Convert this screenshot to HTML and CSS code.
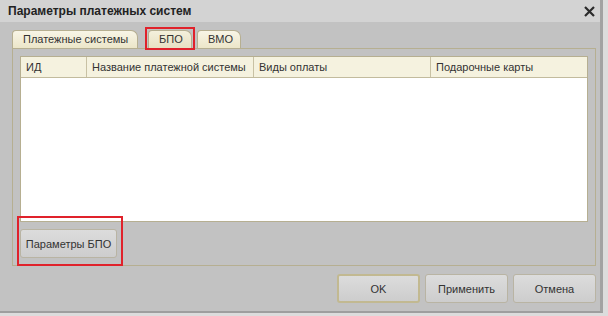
FILE: index.html
```html
<!DOCTYPE html>
<html lang="ru">
<head>
    <meta charset="UTF-8">
    <title>Параметры платежных систем</title>
    <link rel="stylesheet" href="styles.css">
</head>
<body>
    <div class="window">
        <div class="titlebar">
            <span class="title">Параметры платежных систем</span>
            <svg class="close" width="11" height="11" viewBox="0 0 11 11">
                <path d="M1 1 L10 10 M10 1 L1 10" stroke="#2b2b2b" stroke-width="2.2" fill="none"/>
            </svg>
        </div>

        <div class="content">
            <div class="tabs">
                <div class="tab tab-first">Платежные системы</div>
                <div class="tab tab-active marked">БПО</div>
                <div class="tab tab-last">ВМО</div>
            </div>

            <div class="panel">
                <div class="grid">
                    <div class="grid-head">
                        <div class="col col-id">ИД</div>
                        <div class="col col-name">Название платежной системы</div>
                        <div class="col col-types">Виды оплаты</div>
                        <div class="col col-cards">Подарочные карты</div>
                    </div>
                    <div class="grid-body"></div>
                </div>
                <div class="panel-footer">
                    <button class="btn btn-bpo">Параметры БПО</button>
                </div>
            </div>

            <div class="footer">
                <button class="btn btn-default">OK</button>
                <button class="btn">Применить</button>
                <button class="btn">Отмена</button>
            </div>
        </div>
    </div>
</body>
</html>
```

FILE: styles.css
```css
html, body {
    margin: 0;
    padding: 0;
    background-color: #dcdcdc;
}
body {
    width: 608px;
    height: 316px;
    overflow: hidden;
    font-family: "Liberation Sans", Arial, sans-serif;
    font-size: 11px;
    color: #3a3a3a;
}
.window {
    width: 603px;
    height: 313px;
    background-color: #c2c2c2;
    border-right: 3px solid #a2a2a2;
    border-bottom: 2px solid #9e9e9e;
    box-sizing: border-box;
}
.titlebar {
    height: 22px;
    background-color: #d3d3d3;
    display: flex;
    align-items: center;
    justify-content: space-between;
    padding: 0 5px 0 8px;
}
.title {
    font-weight: bold;
    font-size: 12px;
    color: #222222;
}
.close {
    display: block;
}
.content {
    padding: 8px 0 0 12px;
}
.tabs {
    display: flex;
    align-items: flex-end;
    height: 18px;
}
.tab {
    height: 17px;
    line-height: 17px;
    padding: 0 10px;
    white-space: nowrap;
    background: linear-gradient(#f8f5e6, #ece6c9);
    border: 1px solid #b6af91;
    border-bottom: none;
    border-radius: 4px 7px 0 0;
    color: #333333;
}
.tab-first {
    width: 104px;
    margin-right: 10px;
}
.tab-active {
    width: 22px;
    margin-right: 5px;
    text-align: center;
    background: linear-gradient(#f4f0dc, #e8e1c2);
}
.tab-last {
    width: 22px;
    text-align: center;
}
.marked {
    position: relative;
}
.marked::after {
    content: "";
    position: absolute;
    left: -4px;
    right: -4px;
    top: -4px;
    bottom: -2px;
    border: 2px solid #e0222b;
}
.panel {
    width: 584px;
    height: 218px;
    box-sizing: border-box;
    border: 1px solid #b6af91;
    padding: 7px;
    display: flex;
    flex-direction: column;
}
.grid {
    height: 166px;
    border: 1px solid #b6af91;
    background-color: #ffffff;
    display: flex;
    flex-direction: column;
}
.grid-head {
    display: flex;
    height: 20px;
    background-color: #f5f2df;
    border-bottom: 1px solid #c2bb9d;
}
.col {
    line-height: 20px;
    padding-left: 5px;
    white-space: nowrap;
    border-right: 1px solid #c8c1a4;
    box-sizing: border-box;
    color: #333333;
}
.col-id { width: 66px; }
.col-name { width: 167px; }
.col-types { width: 177px; }
.col-cards { flex: 1; border-right: none; }
.grid-body {
    flex: 1;
}
.panel-footer {
    margin-top: 7px;
}
.btn {
    height: 29px;
    padding: 0;
    font-family: "Liberation Sans", Arial, sans-serif;
    font-size: 11px;
    color: #333333;
    background: linear-gradient(#dcdcdc, #cdcdcd);
    border: 1px solid #b9b4a3;
    border-radius: 3px;
    box-sizing: border-box;
}
.btn-bpo {
    width: 97px;
    position: relative;
}
.btn-bpo::after {
    content: "";
    position: absolute;
    left: -4px;
    right: -7px;
    top: -14px;
    bottom: -9px;
    border: 2px solid #e0222b;
}
.footer {
    display: flex;
    justify-content: flex-end;
    gap: 5px;
    margin-top: 8px;
    width: 584px;
}
.footer .btn {
    width: 83px;
}
.btn-default {
    border: 2px solid #c2b991;
}
```
